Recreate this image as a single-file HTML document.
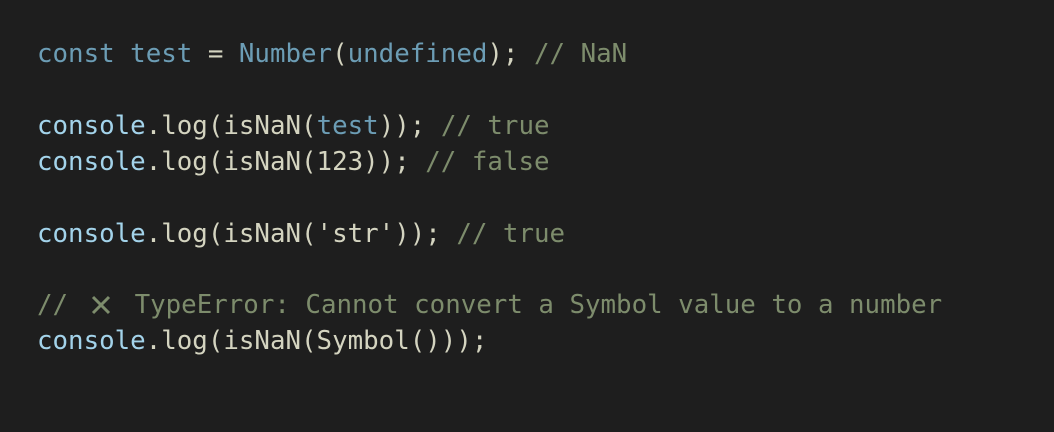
<!DOCTYPE html>
<html><head><style>
html,body{margin:0;padding:0;background:#1e1e1e;}
body{width:1054px;height:432px;overflow:hidden;}
pre{margin:0;position:absolute;left:37px;top:37px;font-family:"DejaVu Sans Mono","Liberation Mono",monospace;font-size:25.8px;line-height:35.9px;color:#d4d4c0;}
.k{color:#6c9db5}.c{color:#a3d3ea}.m{color:#7d8c6c}
.x{display:inline-block;width:51px;height:20px;position:relative;vertical-align:-2px;}
.x svg{position:absolute;left:7px;top:0;}
</style></head><body>
<pre><span class="k">const test</span> = <span class="k">Number</span>(<span class="k">undefined</span>); <span class="m">// NaN</span>

<span class="c">console</span>.log(isNaN(<span class="k">test</span>)); <span class="m">// true</span>
<span class="c">console</span>.log(isNaN(123)); <span class="m">// false</span>

<span class="c">console</span>.log(isNaN('str')); <span class="m">// true</span>

<span class="m">// <span class="x"><svg width="20" height="20" viewBox="0 0 20 20"><path d="M2 2L18 18M18 2L2 18" stroke="#7d8c6c" stroke-width="3"/></svg></span>TypeError: Cannot convert a Symbol value to a number</span>
<span class="c">console</span>.log(isNaN(Symbol()));</pre>
</body></html>
